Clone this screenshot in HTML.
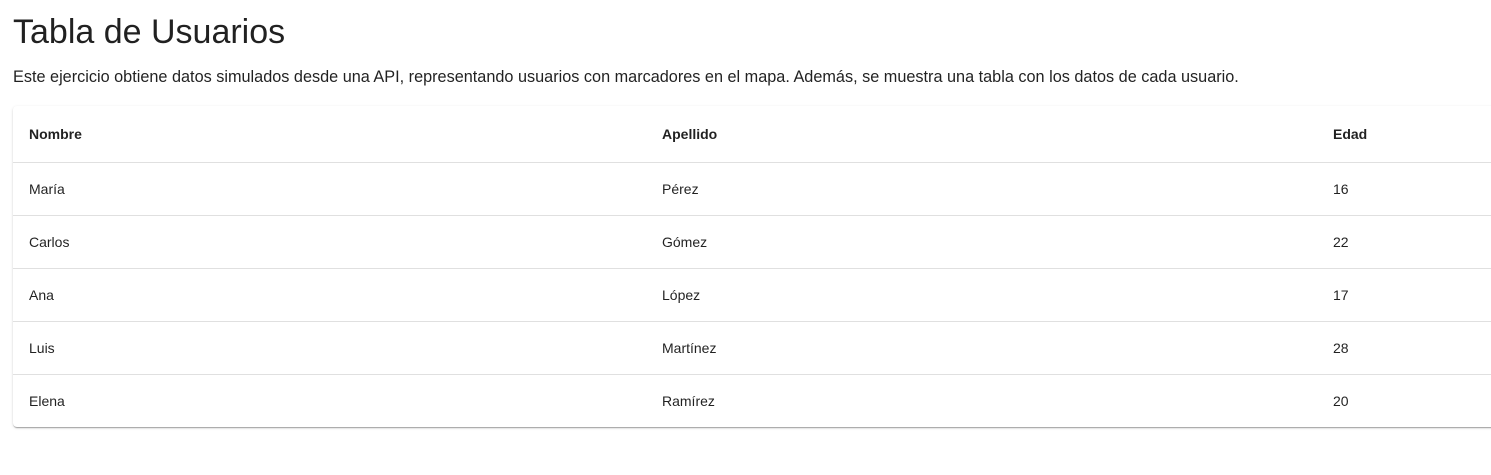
<!DOCTYPE html>
<html><head><meta charset="utf-8"><style>
body{margin:0;background:#fff;font-family:"Liberation Sans",sans-serif;color:rgba(0,0,0,0.87);overflow:hidden;width:1491px;height:475px}
h1{position:absolute;left:13px;top:10px;margin:0;font-size:34px;font-weight:400;line-height:44px}
p{position:absolute;left:13px;top:66px;margin:0;font-size:16.25px;line-height:22px}
.paper{position:absolute;left:13px;top:106px;width:1500px;border-radius:4px;box-shadow:0 2px 1px -1px rgba(0,0,0,.2),0 1px 1px 0 rgba(0,0,0,.14),0 1px 3px 0 rgba(0,0,0,.12);background:#fff}
table{border-collapse:collapse;width:100%;font-size:14px}
td,th{text-align:left;padding:0 16px;border-bottom:1px solid #e0e0e0;height:52px}
th{height:56px;font-weight:700}
tr:last-child td{border-bottom:none}
.c1{width:601px}.c2{width:639px}
</style></head><body>
<h1>Tabla de Usuarios</h1>
<p>Este ejercicio obtiene datos simulados desde una API, representando usuarios con marcadores en el mapa. Además, se muestra una tabla con los datos de cada usuario.</p>
<div class="paper"><table>
<tr><th class="c1">Nombre</th><th class="c2">Apellido</th><th>Edad</th></tr>
<tr><td>María</td><td>Pérez</td><td>16</td></tr>
<tr><td>Carlos</td><td>Gómez</td><td>22</td></tr>
<tr><td>Ana</td><td>López</td><td>17</td></tr>
<tr><td>Luis</td><td>Martínez</td><td>28</td></tr>
<tr><td>Elena</td><td>Ramírez</td><td>20</td></tr>
</table></div>
</body></html>
